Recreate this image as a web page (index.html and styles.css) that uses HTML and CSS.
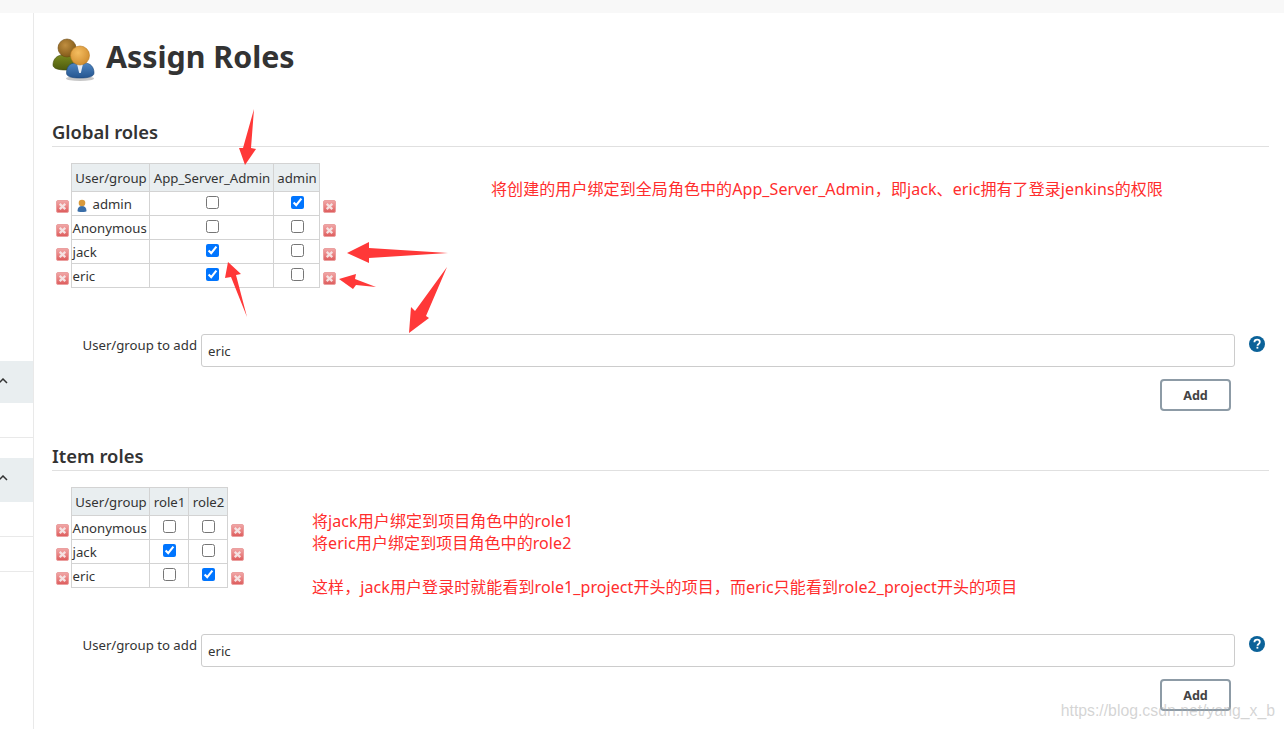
FILE: index.html
```html
<!DOCTYPE html>
<html lang="en">
<head>
<meta charset="utf-8">
<title>Assign Roles</title>
<link rel="stylesheet" href="styles.css">
</head>
<body>
<svg class="defs" width="0" height="0" aria-hidden="true">
  <defs>
    <linearGradient id="redg" x1="0" y1="0" x2="0" y2="1"><stop offset="0" stop-color="#f0a8a8"/><stop offset="0.55" stop-color="#e98080"/><stop offset="1" stop-color="#dc5a5a"/></linearGradient>
    <symbol id="del" viewBox="0 0 13 13">
      <rect x="0.5" y="0.5" width="12" height="12" rx="1.500" fill="url(#redg)" stroke="#eba0a0"/>
      <path d="M3.700 3.900l5.600 5.200M9.300 3.900l-5.600 5.200" stroke="#f5e2e2" stroke-width="2.300"/>
    </symbol>
    <symbol id="help" viewBox="0 0 16 16">
      <circle cx="8" cy="8" r="8" fill="#0b6299"/>
      <path d="M5.400 6.200C5.400 4.700 6.500 3.700 8.100 3.700c1.600 0 2.700 .9 2.700 2.300 0 1-.5 1.600-1.400 2.200-.7.500-.9.800-.9 1.500" fill="none" stroke="#fff" stroke-width="1.800"/>
      <rect x="7.500" y="10.800" width="1.800" height="1.800" fill="#fff"/>
    </symbol>
    <radialGradient id="skin" cx="0.4" cy="0.35" r="0.7"><stop offset="0" stop-color="#f4bd60"/><stop offset="1" stop-color="#d08c2e"/></radialGradient>
    <radialGradient id="skin2" cx="0.4" cy="0.35" r="0.7"><stop offset="0" stop-color="#c08e40"/><stop offset="1" stop-color="#7e5716"/></radialGradient>
    <linearGradient id="blue" x1="0" y1="0" x2="0" y2="1"><stop offset="0" stop-color="#4f86c2"/><stop offset="1" stop-color="#24558f"/></linearGradient>
    <linearGradient id="olive" x1="0" y1="0" x2="0" y2="1"><stop offset="0" stop-color="#7a8a1f"/><stop offset="1" stop-color="#4d5a0d"/></linearGradient>
  </defs>
</svg>
<div class="topbar"></div>
<div class="page">
  <aside class="side">
    <div class="side-block side-first"><svg class="chev" width="8" height="6" viewBox="0 0 8 6"><path d="M-1 5l4-4 4 4" fill="none" stroke="#333" stroke-width="1.500"/></svg></div>
    <div class="side-line side-l1"></div>
    <div class="side-block side-second"><svg class="chev" width="8" height="6" viewBox="0 0 8 6"><path d="M-1 5l4-4 4 4" fill="none" stroke="#333" stroke-width="1.500"/></svg></div>
    <div class="side-line side-l2"></div>
    <div class="side-line side-l3"></div>
  </aside>
  <main class="main">
    <h1 class="title">
      <svg class="title-icon" width="44" height="46" viewBox="0 0 44 46">
        <ellipse cx="28" cy="41.500" rx="14" ry="2.500" fill="#c8c8c8"/>
        <path d="M1 28c0-6 4-10 10-10h8c5 0 8 4 8 10 0 3-4 5-13 5S1 31 1 28z" fill="url(#olive)" stroke="#3f4a0a" stroke-width=".6"/>
        <circle cx="15" cy="11" r="9" fill="url(#skin2)" stroke="#6d4a12" stroke-width=".6"/>
        <path d="M14.500 36c0-6 3-10 9-10h9c6 0 9.500 4 9.500 10 0 3.500-5 5-14 5s-13.500-1.500-13.500-5z" fill="url(#blue)" stroke="#1d4678" stroke-width=".6"/>
        <path d="M25 27h6l-2.200 9h-1.600z" fill="#e6edf5"/>
        <circle cx="28" cy="18.500" r="9.500" fill="url(#skin)" stroke="#b8791f" stroke-width=".6"/>
      </svg>
      <span>Assign Roles</span>
    </h1>

    <section class="section section-global">
      <h2 class="section-title">Global roles</h2>
      <table class="grid grid-global">
        <colgroup><col class="c-del"><col class="c-name"><col class="c-app"><col class="c-admin"><col class="c-del"></colgroup>
        <thead>
          <tr><th class="bare"></th><th>User/group</th><th>App_Server_Admin</th><th>admin</th><th class="bare"></th></tr>
        </thead>
        <tbody>
          <tr>
            <td class="bare"><svg class="del"><use href="#del"/></svg></td>
            <td class="name name-icon"><svg class="user" width="12" height="13" viewBox="0 0 12 13"><path d="M1.500 12c0-3.500 1.800-5 4.500-5s4.500 1.500 4.500 5c0 .8-1.800 1-4.500 1s-4.500-.2-4.500-1z" fill="#3a6ea8"/><circle cx="6" cy="4" r="3.300" fill="#d99a3c"/></svg>admin</td>
            <td class="check"><input type="checkbox"></td><td class="check"><input type="checkbox" checked></td>
            <td class="bare"><svg class="del"><use href="#del"/></svg></td>
          </tr>
          <tr>
            <td class="bare"><svg class="del"><use href="#del"/></svg></td>
            <td class="name">Anonymous</td>
            <td class="check"><input type="checkbox"></td><td class="check"><input type="checkbox"></td>
            <td class="bare"><svg class="del"><use href="#del"/></svg></td>
          </tr>
          <tr>
            <td class="bare"><svg class="del"><use href="#del"/></svg></td>
            <td class="name">jack</td>
            <td class="check"><input type="checkbox" checked></td><td class="check"><input type="checkbox"></td>
            <td class="bare"><svg class="del"><use href="#del"/></svg></td>
          </tr>
          <tr>
            <td class="bare"><svg class="del"><use href="#del"/></svg></td>
            <td class="name">eric</td>
            <td class="check"><input type="checkbox" checked></td><td class="check"><input type="checkbox"></td>
            <td class="bare"><svg class="del"><use href="#del"/></svg></td>
          </tr>
        </tbody>
      </table>
      <div class="add-row">
        <label class="add-label">User/group to add</label>
        <input class="add-input" type="text" value="eric">
        <svg class="help"><use href="#help"/></svg>
      </div>
      <div class="btn-row"><button class="add-btn" type="button">Add</button></div>
    </section>

    <section class="section section-item">
      <h2 class="section-title">Item roles</h2>
      <table class="grid grid-item">
        <colgroup><col class="c-del"><col class="c-name"><col class="c-role"><col class="c-role"><col class="c-del"></colgroup>
        <thead>
          <tr><th class="bare"></th><th>User/group</th><th>role1</th><th>role2</th><th class="bare"></th></tr>
        </thead>
        <tbody>
          <tr>
            <td class="bare"><svg class="del"><use href="#del"/></svg></td>
            <td class="name">Anonymous</td>
            <td class="check"><input type="checkbox"></td><td class="check"><input type="checkbox"></td>
            <td class="bare"><svg class="del"><use href="#del"/></svg></td>
          </tr>
          <tr>
            <td class="bare"><svg class="del"><use href="#del"/></svg></td>
            <td class="name">jack</td>
            <td class="check"><input type="checkbox" checked></td><td class="check"><input type="checkbox"></td>
            <td class="bare"><svg class="del"><use href="#del"/></svg></td>
          </tr>
          <tr>
            <td class="bare"><svg class="del"><use href="#del"/></svg></td>
            <td class="name">eric</td>
            <td class="check"><input type="checkbox"></td><td class="check"><input type="checkbox" checked></td>
            <td class="bare"><svg class="del"><use href="#del"/></svg></td>
          </tr>
        </tbody>
      </table>
      <div class="add-row">
        <label class="add-label">User/group to add</label>
        <input class="add-input" type="text" value="eric">
        <svg class="help"><use href="#help"/></svg>
      </div>
      <div class="btn-row"><button class="add-btn" type="button">Add</button></div>
    </section>
  </main>
</div>

<p class="note note-global">将创建的用户绑定到全局角色中的App_Server_Admin，即jack、eric拥有了登录jenkins的权限</p>
<div class="note note-item">
  <p>将jack用户绑定到项目角色中的role1</p>
  <p>将eric用户绑定到项目角色中的role2</p>
  <p class="note-gap">这样，jack用户登录时就能看到role1_project开头的项目，而eric只能看到role2_project开头的项目</p>
</div>
<svg class="arrows" width="1284" height="729" viewBox="0 0 1284 729" aria-hidden="true">
  <polygon points="254,109 251,148 256,149 245,165 239,148 243,148"/>
  <polygon points="347,253 369,242 369,248 448,253 369,258 369,263"/>
  <polygon points="339,279 356,274 355,279 376,287 356,285 353,289"/>
  <polygon points="447,267 426,316 429,318 409,333 411,307 415,311"/>
  <polygon points="228,262 241,274 236,275 247,317 231,277 225,278"/>
</svg>
<div class="watermark">https://blog.csdn.net/yang_x_b</div>
</body>
</html>
```
FILE: styles.css
```css
* { box-sizing: border-box; }
html, body { margin: 0; padding: 0; height: 729px; overflow: hidden; background: #fff; }
body { position: relative; font-family: "Noto Sans", "Open Sans", "Noto Sans CJK SC", sans-serif; font-size: 13px; color: #333; }
.defs { position: absolute; }
.topbar { height: 13px; background: #f8f8f8; }
.page { display: flex; height: 716px; }

.side { width: 34px; flex: none; border-right: 1px solid #e9e9e9; }
.side-block { height: 42px; background: #e9eef0; position: relative; overflow: hidden; }
.side-first { margin-top: 348px; }
.side-second { margin-top: 20px; height: 44px; }
.side-line { height: 1px; background: #e9e9e9; }
.side-l1 { margin-top: 34px; }
.side-l2 { margin-top: 34px; }
.side-l3 { margin-top: 34px; }
.chev { position: absolute; left: 0; top: 17px; }

.main { flex: 1; min-width: 0; padding: 0 15px 0 18px; }
.title { display: flex; align-items: center; gap: 10px; margin: 21px 0 0; height: 46px; font-size: 30.35px; font-weight: 700; color: #333; line-height: 46px; }
.title-icon { flex: none; margin-top: 6px; }

.section-global { margin-top: 40px; }
.section-item { margin-top: 33px; }
.section-title { margin: 0; height: 27px; font-size: 18.4px; line-height: 24px; font-weight: 600; color: #333; border-bottom: 1px solid #e0e0e0; }

.grid { margin: 16px 0 0 3px; border-collapse: collapse; table-layout: fixed; }
.grid-global { width: 280px; }
.grid-item { width: 188px; }
.c-del { width: 16px; }
.c-name { width: 78px; }
.c-app { width: 124px; }
.c-admin { width: 46px; }
.c-role { width: 39px; }
.grid th, .grid td { border: 1px solid #d3d3d3; padding: 0; height: 24px; text-align: center; font-size: 13.2px; font-weight: 400; color: #333; line-height: 17px; white-space: nowrap; }
.grid th { height: 28px; background: #e9eef0; padding: 1px 0 0 2px; }
.grid .check { padding-left: 2px; }
.grid .bare { border: 0; background: none; padding: 0; }
.grid .name { text-align: left; padding: 1px 0 0 1px; }
.grid .name-icon { padding-left: 4px; }
.grid input[type="checkbox"] { margin: 0 0 3px; vertical-align: middle; }
.del { display: block; width: 13px; height: 13px; margin: 5px 0 0 3px; }
.grid td.bare:first-child .del { margin-left: 1px; }
.user { vertical-align: -3px; margin-right: 5px; }

.add-row { display: flex; align-items: flex-start; margin-top: 46px; }
.add-label { width: 149px; flex: none; text-align: right; padding: 2px 4px 0 0; font-size: 13.2px; line-height: 18px; }
.add-input { width: 1034px; flex: none; height: 33px; border: 1px solid #ccc; border-radius: 3px; padding: 0 6px; font: 13.2px "Noto Sans", sans-serif; color: #333; background: #fff; }
.help { width: 16px; height: 16px; margin: 2px 0 0 14px; flex: none; }
.btn-row { display: flex; padding-left: 1108px; margin-top: 12px; }
.add-btn { width: 71px; height: 32px; border: 2px solid #8d9ba6; border-radius: 4px; background: #fff; font: 700 12.6px "Noto Sans", sans-serif; color: #444; padding: 0; }

.note { position: absolute; margin: 0; color: #ff2d2d; font-family: "Noto Sans", "Noto Sans CJK SC", sans-serif; font-size: 16px; line-height: 22px; letter-spacing: 0.08px; white-space: nowrap; }
.note p { margin: 0; }
.note .note-gap { margin-top: 22px; }
.note-global { left: 491px; top: 178px; }
.note-item { left: 312px; top: 510px; }
.arrows { position: absolute; left: 0; top: 0; pointer-events: none; }
.arrows polygon { fill: #ff3838; }
.watermark { position: absolute; right: 9px; top: 701px; font-family: "Liberation Sans", sans-serif; font-size: 15.8px; line-height: 20px; color: rgba(170,170,170,0.5); }
```
